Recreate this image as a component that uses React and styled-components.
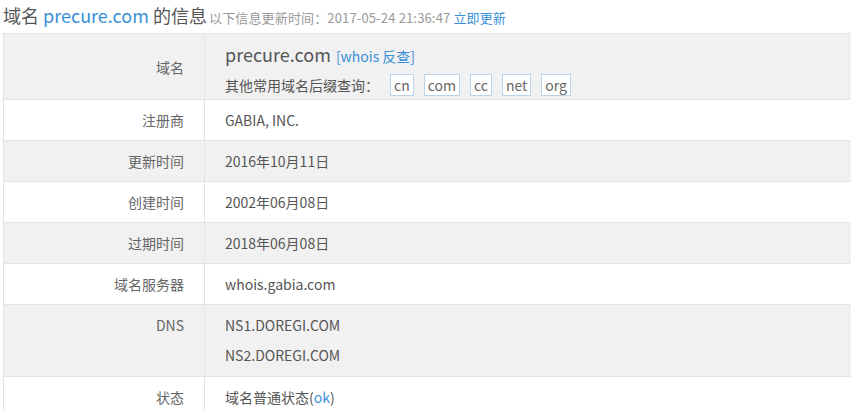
import styled, { createGlobalStyle } from "styled-components";

const GlobalStyle = createGlobalStyle`
    body {
        margin: 0;
        background: #ffffff;
        overflow: hidden;
        font-family: "Noto Sans CJK SC", "Liberation Sans", sans-serif;
        color: #555555;
    }
`

const tlds = ['cn', 'com', 'cc', 'net', 'org']

const rows = [
    { label: '注册商', value: 'GABIA, INC.' },
    { label: '更新时间', value: '2016年10月11日', grey: true },
    { label: '创建时间', value: '2002年06月08日' },
    { label: '过期时间', value: '2018年06月08日', grey: true },
    { label: '域名服务器', value: 'whois.gabia.com' },
]

export default function App() {
    return (
        <>
            <GlobalStyle />
            <Page>
                <Title>
                    域名 <Blue>precure.com</Blue> 的信息
                    <Updated>
                        以下信息更新时间：2017-05-24 21:36:47 <UpdateLink>立即更新</UpdateLink>
                    </Updated>
                </Title>

                <Table>
                    <tbody>
                        <Row $grey>
                            <Label>域名</Label>
                            <Value>
                                <DomainLine>
                                    <Domain>precure.com</Domain>
                                    <Whois>[whois 反查]</Whois>
                                </DomainLine>
                                <SuffixLine>
                                    其他常用域名后缀查询：
                                    <Tags>
                                        {tlds.map(t => (
                                            <Tag key={t}>{t}</Tag>
                                        ))}
                                    </Tags>
                                </SuffixLine>
                            </Value>
                        </Row>

                        {rows.map(r => (
                            <Row key={r.label} $grey={r.grey}>
                                <Label>{r.label}</Label>
                                <Value>{r.value}</Value>
                            </Row>
                        ))}

                        <Row $grey>
                            <Label $top>DNS</Label>
                            <Value>
                                <NsList>
                                    <div>NS1.DOREGI.COM</div>
                                    <div>NS2.DOREGI.COM</div>
                                </NsList>
                            </Value>
                        </Row>

                        <Row>
                            <Label>状态</Label>
                            <Value>域名普通状态(<Blue>ok</Blue>)</Value>
                        </Row>
                    </tbody>
                </Table>
            </Page>
        </>
    )
}

const Page = styled.div`
    padding-left: 3px;
`

const Title = styled.div`
    height: 33px;
    line-height: 30px;
    font-size: 18px;
    color: #555555;
    white-space: nowrap;
`

const Blue = styled.span`
    color: #3a8fd8;
`

const Updated = styled.span`
    font-size: 13px;
    color: #999999;
    margin-left: 2px;
    letter-spacing: 0.15px;
`

const UpdateLink = styled.a`
    color: #3a8fd8;
    cursor: pointer;
`

const Table = styled.table`
    width: 1000px;
    border-collapse: collapse;
    font-size: 14px;
`

const Row = styled.tr`
    background: ${p => (p.$grey ? '#f1f1f1' : '#ffffff')};
    border-top: 1px solid #e4e4e4;
    border-bottom: 1px solid #e4e4e4;
    border-left: 1px solid #e4e4e4;
`

const Label = styled.td`
    width: 180px;
    padding: 5px 20px 5px 0;
    text-align: right;
    vertical-align: ${p => (p.$top ? 'top' : 'middle')};
    line-height: 30px;
    color: #666666;
    border-right: 1px solid #e4e4e4;
    white-space: nowrap;
`

const Value = styled.td`
    padding: 5px 0 5px 20px;
    line-height: 30px;
    color: #555555;
    vertical-align: top;
`

const DomainLine = styled.div`
    display: flex;
    align-items: baseline;
    height: 30px;
    line-height: 30px;
    font-size: 18px;
`

const Domain = styled.span`
    font-size: 18px;
    color: #555555;
`

const Whois = styled.a`
    font-size: 14px;
    color: #3a8fd8;
    margin-left: 5px;
`

const SuffixLine = styled.div`
    display: flex;
    align-items: center;
    font-size: 14px;
    line-height: 22px;
    margin-top: 5px;
    margin-bottom: -2px;
    height: 22px;
`

const Tags = styled.div`
    display: flex;
    gap: 10px;
    margin-left: 11px;
`

const Tag = styled.span`
    display: inline-block;
    height: 22px;
    line-height: 21px;
    padding: 0 3px;
    font-size: 14px;
    color: #666666;
    background: #ffffff;
    border: 1px solid #bcd3e8;
    box-sizing: border-box;
`

const NsList = styled.div`
    padding-bottom: 1px;
`
